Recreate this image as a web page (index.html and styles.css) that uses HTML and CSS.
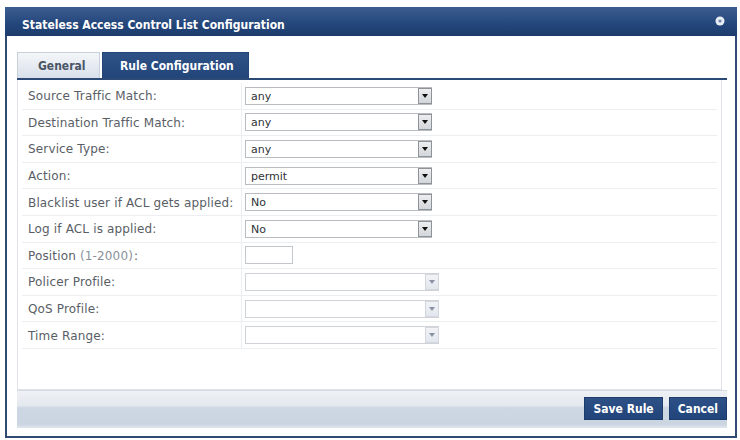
FILE: index.html
```html
<!DOCTYPE html>
<html>
<head>
    <title>Stateless Access Control List Configuration</title>
    <link rel="stylesheet" href="styles.css">
</head>
<body>
    <div class="dialog">
        <div class="title-bar">
            <span class="title">Stateless Access Control List Configuration</span>
            <svg class="close" width="10" height="10" viewBox="0 0 10 10">
                <circle cx="5" cy="5" r="4.5" fill="#e8eef6"/>
                <circle cx="5" cy="5" r="1.6" fill="#6d86aa"/>
            </svg>
        </div>

        <div class="dialog-body">
            <div class="tabs">
                <div class="tab">General</div>
                <div class="tab active">Rule Configuration</div>
            </div>

            <div class="panel">
                <div class="row">
                    <div class="label">Source Traffic Match:</div>
                    <div class="field"><div class="select"><span class="value">any</span><span class="arrow"></span></div></div>
                </div>
                <div class="row">
                    <div class="label">Destination Traffic Match:</div>
                    <div class="field"><div class="select"><span class="value">any</span><span class="arrow"></span></div></div>
                </div>
                <div class="row">
                    <div class="label">Service Type:</div>
                    <div class="field"><div class="select"><span class="value">any</span><span class="arrow"></span></div></div>
                </div>
                <div class="row">
                    <div class="label">Action:</div>
                    <div class="field"><div class="select"><span class="value">permit</span><span class="arrow"></span></div></div>
                </div>
                <div class="row">
                    <div class="label">Blacklist user if ACL gets applied:</div>
                    <div class="field"><div class="select"><span class="value">No</span><span class="arrow"></span></div></div>
                </div>
                <div class="row">
                    <div class="label">Log if ACL is applied:</div>
                    <div class="field"><div class="select"><span class="value">No</span><span class="arrow"></span></div></div>
                </div>
                <div class="row">
                    <div class="label">Position <span class="hint">(1-2000)</span>:</div>
                    <div class="field"><div class="text-input"></div></div>
                </div>
                <div class="row">
                    <div class="label">Policer Profile:</div>
                    <div class="field"><div class="select disabled"><span class="value"></span><span class="arrow"></span></div></div>
                </div>
                <div class="row">
                    <div class="label">QoS Profile:</div>
                    <div class="field"><div class="select disabled"><span class="value"></span><span class="arrow"></span></div></div>
                </div>
                <div class="row">
                    <div class="label">Time Range:</div>
                    <div class="field"><div class="select disabled"><span class="value"></span><span class="arrow"></span></div></div>
                </div>
            </div>

            <div class="footer">
                <button class="btn">Save Rule</button>
                <button class="btn">Cancel</button>
            </div>
        </div>
    </div>
</body>
</html>
```

FILE: styles.css
```css
body {
    margin: 0;
    padding: 0;
    background-color: #ffffff;
    font-family: "DejaVu Sans", Verdana, sans-serif;
}

.dialog {
    margin: 7px 0 0 5px;
    width: 732px;
    height: 431px;
    box-sizing: border-box;
    border: 2px solid #2f4b73;
    border-top: none;
    background-color: #ffffff;
}

.title-bar {
    height: 29px;
    margin: 0 -2px;
    padding: 0 12px 0 17px;
    display: flex;
    align-items: center;
    justify-content: space-between;
    background: linear-gradient(#3c5d8f, #23467b 60%, #1d3c6c);
}

.title {
    padding-top: 6px;
    color: #ffffff;
    font-family: "DejaVu Sans Condensed", "DejaVu Sans", sans-serif;
    font-weight: bold;
    font-size: 12px;
}

.close {
    display: block;
    margin-top: -2px;
}

.dialog-body {
    padding: 16px 8px 0 10px;
}

.tabs {
    display: flex;
    gap: 2px;
    height: 26px;
    border-bottom: 2px solid #2d4a76;
}

.tab {
    height: 26px;
    line-height: 27px;
    padding: 0 10px 0 20px;
    box-sizing: border-box;
    font-family: "DejaVu Sans Condensed", "DejaVu Sans", sans-serif;
    font-weight: bold;
    font-size: 12px;
    color: #4a5566;
    background: linear-gradient(#f4f6f9, #d9e0ea);
    border: 1px solid #c8d0da;
    border-bottom: none;
}

.tab:first-child {
    width: 83px;
}

.tab.active {
    width: 147px;
    padding-left: 17px;
    color: #ffffff;
    background: linear-gradient(#2e5186, #22457a);
    border-color: #22457a;
}

.panel {
    width: 705px;
    height: 310px;
    box-sizing: border-box;
    padding: 3px 4px 0 4px;
    border: 1px solid #dfe3e8;
    border-top: none;
}

.row {
    display: grid;
    grid-template-columns: 220px 1fr;
    height: 26.6px;
    box-sizing: border-box;
    border-bottom: 1px solid #eceff2;
}

.label {
    display: flex;
    align-items: center;
    padding: 1px 0 0 6px;
    font-size: 12px;
    letter-spacing: 0.15px;
    color: #595e66;
    border-right: 1px solid #eceff2;
    white-space: nowrap;
}

.hint {
    color: #8a9099;
    margin: 0 1px 0 4px;
}

.field {
    display: flex;
    align-items: center;
    padding-left: 3px;
}

.select {
    width: 187px;
    height: 18px;
    box-sizing: border-box;
    display: flex;
    align-items: center;
    justify-content: space-between;
    border: 1px solid #b9bdc2;
    border-right: none;
    background-color: #ffffff;
}

.value {
    padding: 1px 0 0 5px;
    font-size: 11px;
    color: #2e3238;
}

.arrow {
    width: 14px;
    height: 16px;
    box-sizing: border-box;
    display: flex;
    align-items: center;
    justify-content: center;
    border: 1px solid #8e9399;
    background: linear-gradient(#eceef0, #d3d6da);
}

.arrow::after {
    content: "";
    border-left: 3px solid transparent;
    border-right: 3px solid transparent;
    border-top: 4px solid #111111;
}

.select.disabled {
    width: 194px;
    border-color: #cfd3d8;
}

.select.disabled .arrow {
    border-color: #d4d8de;
    background: linear-gradient(#f1f3f7, #e2e6ee);
}

.select.disabled .arrow::after {
    border-top-color: #8a93a3;
}

.text-input {
    width: 48px;
    height: 18px;
    box-sizing: border-box;
    border: 1px solid #c3c7cc;
    background-color: #ffffff;
}

.footer {
    width: 710px;
    height: 38px;
    box-sizing: border-box;
    display: flex;
    justify-content: flex-end;
    align-items: center;
    gap: 6px;
    padding: 0 0 2px 0;
    border-top: 1px solid #d6dbe1;
    background: linear-gradient(#eef1f5, #e3e8ef 40%, #cdd7e3 45%, #cbd5e2 90%, #e2e7ee);
}

.btn {
    height: 23px;
    padding: 0 8px;
    border: 1px solid #1c3c6b;
    background: linear-gradient(#2d5187, #21447a);
    color: #ffffff;
    font-family: "DejaVu Sans Condensed", "DejaVu Sans", sans-serif;
    font-weight: bold;
    font-size: 12px;
    cursor: pointer;
}
```
